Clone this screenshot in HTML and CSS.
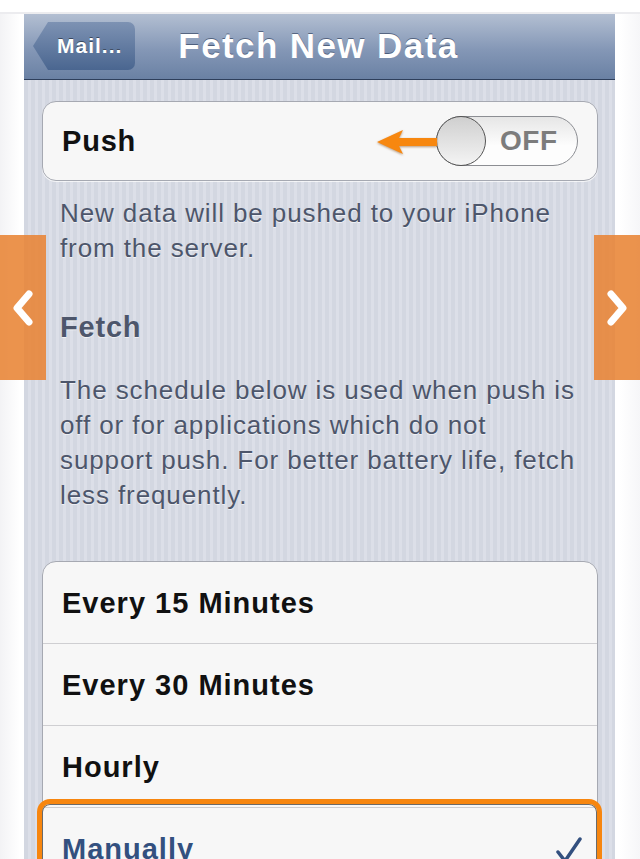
FILE: index.html
```html
<!DOCTYPE html>
<html lang="en">
<head>
	<meta charset="UTF-8">
	<title>Fetch New Data</title>
	<link rel="stylesheet" href="styles.css">
</head>
<body>

<div class="frame">
	<div class="screen">
		<div class="navbar">
			<div class="back-button">Mail...</div>
			<h1>Fetch New Data</h1>
		</div>

		<div class="content">
			<div class="group push-cell">
				<span class="cell-label">Push</span>
				<svg class="arrow" width="64" height="30" viewBox="0 0 64 30">
					<path d="M2 15 L28 3 L24 11 L62 11 L62 19 L24 19 L28 27 Z" fill="#f7870f"/>
				</svg>
				<div class="switch">
					<span class="knob"></span>
					<span class="switch-text">OFF</span>
				</div>
			</div>

			<p class="footnote">New data will be pushed to your iPhone from the server.</p>

			<h2 class="section-title">Fetch</h2>
			<p class="footnote">The schedule below is used when push is off or for applications which do not support push. For better battery life, fetch less frequently.</p>

			<ul class="group schedule">
				<li>Every 15 Minutes</li>
				<li>Every 30 Minutes</li>
				<li>Hourly</li>
				<li class="selected">Manually
					<svg class="check" width="28" height="28" viewBox="0 0 28 28">
						<path d="M3 16 L10 25 L25 3" fill="none" stroke="#33507f" stroke-width="3.5" stroke-linecap="round" stroke-linejoin="round"/>
					</svg>
				</li>
			</ul>
		</div>
	</div>
</div>

<div class="side-tab prev">
	<svg width="26" height="40" viewBox="0 0 26 40">
		<path d="M19 6 L7 20 L19 34" fill="none" stroke="white" stroke-width="7" stroke-linecap="round" stroke-linejoin="round"/>
	</svg>
</div>
<div class="side-tab next">
	<svg width="26" height="40" viewBox="0 0 26 40">
		<path d="M7 6 L19 20 L7 34" fill="none" stroke="white" stroke-width="7" stroke-linecap="round" stroke-linejoin="round"/>
	</svg>
</div>

</body>
</html>
```

FILE: styles.css
```css
body {
	margin: 0;
	padding: 0;
	background: #fff;
	font-family: "Liberation Sans", Helvetica, Arial, sans-serif;
	overflow: hidden;
}

.frame {
	margin-top: 12px;
	border-top: 2px solid #ececef;
	height: 845px;
	background: linear-gradient(90deg, #f3f3f5 0, #fff 20px, #fff 620px, #f6f6f8 640px);
}

.screen {
	margin-left: 24px;
	width: 591px;
	height: 845px;
	overflow: hidden;
	background: repeating-linear-gradient(90deg, #d3d7e1 0, #d3d7e1 4px, #dcdfe8 4px, #dcdfe8 7px);
}

.navbar {
	height: 66px;
	border-bottom: 1px solid #2e3f5c;
	background: linear-gradient(#b3bfd2, #8497b6 55%, #6a81a4);
	display: flex;
	align-items: center;
	padding-bottom: 13px;
	box-sizing: border-box;
}

.back-button {
	margin-left: 9px;
	margin-top: 12px;
	height: 48px;
	line-height: 48px;
	padding: 0 13px 0 24px;
	color: #fff;
	font-size: 21px;
	font-weight: 700;
	letter-spacing: 1px;
	text-shadow: 0 -1px 0 rgba(0,0,0,0.45);
	background: linear-gradient(#7d92b3, #4a6690);
	border-radius: 7px;
	clip-path: polygon(15px 0, 100% 0, 100% 100%, 15px 100%, 0 50%);
}

.navbar h1 {
	margin: 12px 0 0 43px;
	color: #fff;
	font-size: 35px;
	font-weight: 700;
	letter-spacing: 1.4px;
	text-shadow: 0 -1px 0 rgba(40,55,85,0.6);
	line-height: 40px;
}

.content {
	padding: 21px 17px 0 18px;
}

.group {
	background: #f7f7f7;
	border: 1px solid #a6a9b2;
	border-radius: 14px;
	box-shadow: 0 1px 0 rgba(255,255,255,0.7);
}

.push-cell {
	height: 78px;
	display: flex;
	align-items: center;
	padding: 0 19px;
	position: relative;
}

.cell-label {
	font-size: 29px;
	font-weight: 700;
	letter-spacing: 0.8px;
	color: #111;
	flex: 1;
}

.arrow {
	position: absolute;
	left: 332px;
	top: 25px;
	filter: drop-shadow(0 1px 1px rgba(120,60,0,0.5));
}

.switch {
	width: 140px;
	height: 48px;
	border: 1px solid #8c8e93;
	border-radius: 25px;
	background: linear-gradient(#e6e6e6, #fdfdfd 60%);
	display: flex;
	align-items: center;
	box-sizing: content-box;
}

.knob {
	width: 50px;
	height: 50px;
	border-radius: 50%;
	border: 1px solid #555;
	margin-left: -1px;
	background: linear-gradient(#cfcfcf, #f4f4f4);
	box-sizing: border-box;
}

.switch-text {
	margin-left: 14px;
	font-size: 28px;
	font-weight: 700;
	letter-spacing: 0.5px;
	color: #7c7c7c;
}

.footnote {
	margin: 15px 0 0 0;
	padding: 0 18px;
	font-size: 26px;
	line-height: 35px;
	letter-spacing: 0.9px;
	color: #4d566b;
	text-shadow: 0 1px 0 rgba(255,255,255,0.6);
}

.section-title {
	margin: 44px 0 0 0;
	padding: 0 18px;
	font-size: 29px;
	line-height: 35px;
	font-weight: 700;
	letter-spacing: 0.8px;
	color: #4d566b;
	text-shadow: 0 1px 0 rgba(255,255,255,0.6);
}

.section-title + .footnote {
	margin-top: 28px;
}

.schedule {
	list-style: none;
	margin: 48px 0 0 0;
	padding: 0;
}

.schedule li {
	height: 81px;
	line-height: 83px;
	padding: 0 19px;
	font-size: 29px;
	font-weight: 700;
	letter-spacing: 1px;
	color: #111;
	border-top: 1px solid #cfcfd2;
	position: relative;
}

.schedule li:first-child {
	border-top: none;
}

.schedule li.selected {
	color: #33507f;
}

.schedule li.selected::after {
	content: "";
	position: absolute;
	left: -6px;
	right: -5px;
	top: -9px;
	height: 140px;
	border: 5px solid #f7860f;
	border-radius: 13px;
	box-shadow: inset 0 0 0 1px #6a6a6a;
}

.check {
	position: absolute;
	right: 14px;
	top: 28px;
}

.side-tab {
	position: absolute;
	top: 235px;
	width: 46px;
	height: 145px;
	background: rgba(232, 132, 52, 0.88);
	display: flex;
	align-items: center;
	justify-content: center;
}

.side-tab.prev {
	left: 0;
}

.side-tab.next {
	right: 0;
}
```
